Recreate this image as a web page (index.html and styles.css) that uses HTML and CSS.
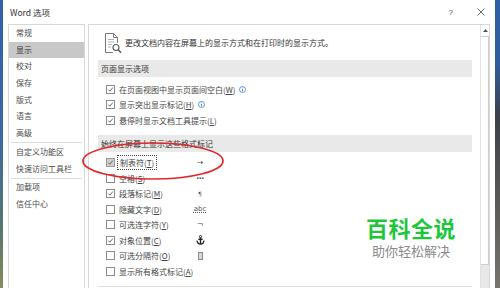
FILE: index.html
```html
<!DOCTYPE html>
<html lang="zh-CN">
<head>
  <meta charset="UTF-8">
  <title>Word 选项</title>
  <link rel="stylesheet" href="styles.css">
</head>
<body>
  <div class="screen">
    <div class="desk desk-left"></div>

    <div class="window">
      <div class="titlebar">
        <span class="title">Word 选项</span>
        <span class="help">?</span>
        <svg class="close" width="8" height="8" viewBox="0 0 8 8">
          <path d="M0.5 0.5 L7.5 7.5 M7.5 0.5 L0.5 7.5" stroke="#555" stroke-width="0.9"/>
        </svg>
      </div>

      <div class="panes">
        <ul class="nav">
          <li>常规</li>
          <li class="active">显示</li>
          <li>校对</li>
          <li>保存</li>
          <li>版式</li>
          <li>语言</li>
          <li>高级</li>
          <li class="sep"></li>
          <li>自定义功能区</li>
          <li>快速访问工具栏</li>
          <li class="sep"></li>
          <li>加载项</li>
          <li>信任中心</li>
        </ul>

        <div class="content">
          <div class="main">
            <div class="intro">
              <svg class="intro-icon" width="18" height="21" viewBox="0 0 18 21">
                <path d="M9 19.5H1.5V0.5h8l4 4V10" fill="none" stroke="#7a7a7a"/>
                <path d="M9.5 0.5v4h4" fill="none" stroke="#7a7a7a"/>
                <path d="M4 6.5h6M4 9h6M4 11.5h4M4 14h3" stroke="#a0a0a0" stroke-width="0.8"/>
                <circle cx="12" cy="14.5" r="3" fill="#fff" stroke="#5a5a5a" stroke-width="1.1"/>
                <path d="M14.2 16.7 L17 19.8" stroke="#5a5a5a" stroke-width="1.6"/>
              </svg>
              <span>更改文档内容在屏幕上的显示方式和在打印时的显示方式。</span>
            </div>

            <div class="section-head">页面显示选项</div>
            <div class="rows first">
              <div class="row">
                <span class="cb"><svg viewBox="0 0 8 8"><path d="M1.5 4.2 L3.3 6 L6.6 1.8" fill="none" stroke="#555"/></svg></span>
                <span>在页面视图中显示页面间空白(<u>W</u>)</span>
                <svg class="info" width="7" height="7" viewBox="0 0 7 7"><circle cx="3.5" cy="3.5" r="3" fill="none" stroke="#3f7fd0" stroke-width="0.8"/><path d="M3.5 3v2.4M3.5 1.6v0.7" stroke="#3f7fd0" stroke-width="0.9"/></svg>
              </div>
              <div class="row">
                <span class="cb"><svg viewBox="0 0 8 8"><path d="M1.5 4.2 L3.3 6 L6.6 1.8" fill="none" stroke="#555"/></svg></span>
                <span>显示突出显示标记(<u>H</u>)</span>
                <svg class="info" width="7" height="7" viewBox="0 0 7 7"><circle cx="3.5" cy="3.5" r="3" fill="none" stroke="#3f7fd0" stroke-width="0.8"/><path d="M3.5 3v2.4M3.5 1.6v0.7" stroke="#3f7fd0" stroke-width="0.9"/></svg>
              </div>
              <div class="row">
                <span class="cb"><svg viewBox="0 0 8 8"><path d="M1.5 4.2 L3.3 6 L6.6 1.8" fill="none" stroke="#555"/></svg></span>
                <span>悬停时显示文档工具提示(<u>L</u>)</span>
              </div>
            </div>

            <div class="section-head">始终在屏幕上显示这些格式标记</div>
            <div class="rows">
              <div class="row">
                <span class="cb hover"><svg viewBox="0 0 8 8"><path d="M1.5 4.2 L3.3 6 L6.6 1.8" fill="none" stroke="#555"/></svg></span>
                <span class="label"><span class="focus">制表符(<u>T</u>)</span></span>
                <span class="mark">→</span>
              </div>
              <div class="row">
                <span class="cb"></span>
                <span class="label">空格(<u>S</u>)</span>
                <span class="mark dots">···</span>
              </div>
              <div class="row">
                <span class="cb"><svg viewBox="0 0 8 8"><path d="M1.5 4.2 L3.3 6 L6.6 1.8" fill="none" stroke="#555"/></svg></span>
                <span class="label">段落标记(<u>M</u>)</span>
                <span class="mark small">¶</span>
              </div>
              <div class="row">
                <span class="cb"></span>
                <span class="label">隐藏文字(<u>D</u>)</span>
                <span class="mark abc">abc</span>
              </div>
              <div class="row">
                <span class="cb"></span>
                <span class="label">可选连字符(<u>Y</u>)</span>
                <span class="mark">¬</span>
              </div>
              <div class="row">
                <span class="cb"><svg viewBox="0 0 8 8"><path d="M1.5 4.2 L3.3 6 L6.6 1.8" fill="none" stroke="#555"/></svg></span>
                <span class="label">对象位置(<u>C</u>)</span>
                <span class="mark">
                  <svg width="9" height="10" viewBox="0 0 9 10">
                    <circle cx="4.5" cy="1.6" r="1.1" fill="none" stroke="#222" stroke-width="1"/>
                    <path d="M4.5 2.7V9M2.4 4.2h4.2" stroke="#222" stroke-width="1.4"/>
                    <path d="M1 5.6 Q1.5 9 4.5 9 Q7.5 9 8 5.6" fill="none" stroke="#222" stroke-width="1.3"/>
                  </svg>
                </span>
              </div>
              <div class="row">
                <span class="cb"></span>
                <span class="label">可选分隔符(<u>O</u>)</span>
                <span class="mark"><span class="zw"></span></span>
              </div>
              <div class="row">
                <span class="cb"></span>
                <span class="label">显示所有格式标记(<u>A</u>)</span>
              </div>
            </div>

            <div class="section-head next"></div>
          </div>

          <div class="scrollbar">
            <div class="sb-up">
              <svg width="5" height="3" viewBox="0 0 5 3"><path d="M0 3 L2.5 0 L5 3Z" fill="#555"/></svg>
            </div>
            <div class="sb-thumb"></div>
            <div class="sb-track"></div>
          </div>
        </div>
      </div>
    </div>

    <div class="desk desk-right"></div>

    <!-- annotation overlays -->
    <svg class="circle-mark" width="500" height="288" viewBox="0 0 500 288">
      <ellipse cx="153" cy="161" rx="70" ry="18" fill="none" stroke="#e5262a" stroke-width="1.7"/>
    </svg>
    <div class="watermark">
      <div class="wm-title">百科全说</div>
      <div class="wm-sub">助你轻松解决</div>
    </div>
  </div>
</body>
</html>
```

FILE: styles.css
```css
body {
  margin: 0;
  width: 500px;
  height: 288px;
  overflow: hidden;
  font-family: "Noto Sans CJK SC", "Liberation Sans", sans-serif;
  color: #444;
}

.screen {
  position: relative;
  display: flex;
  height: 288px;
}

.desk-left {
  width: 3px;
  background: linear-gradient(#2f62ab, #3a68a6 45%, #56786c 80%, #8a8a5c);
}

.desk-right {
  width: 5px;
  background: linear-gradient(#2c5fa9, #2f5e9e 22%, #3c4048 40%, #5f5e5a 75%, #77756e);
}

.window {
  flex: 1;
  display: flex;
  flex-direction: column;
  background: #fff;
  min-width: 0;
}

.titlebar {
  height: 24px;
  display: flex;
  align-items: center;
  padding-left: 7px;
  font-size: 8.5px;
  color: #333;
}

.title {
  flex: 1;
}

.help {
  font-family: "Liberation Sans", sans-serif;
  font-size: 8px;
  color: #555;
  margin-right: 24px;
}

.close {
  margin-right: 10px;
}

.panes {
  flex: 1;
  display: flex;
  gap: 3px;
  padding: 0 5px;
  min-height: 0;
}

/* left navigation */
.nav {
  width: 75px;
  margin: 0;
  padding: 0;
  list-style: none;
  border: 1px solid #d8d8d8;
  border-bottom: none;
  font-size: 8px;
}

.nav li {
  height: 16.7px;
  line-height: 16.7px;
  padding-left: 7px;
  color: #4a4a4a;
  white-space: nowrap;
}

.nav li.active {
  background: #c8c8c8;
  color: #333;
}

.nav li.sep {
  height: 1px;
  margin: 0.5px 2px;
  padding: 0;
  background: #dcdcdc;
}

/* right content */
.content {
  flex: 1;
  display: flex;
  border: 1px solid #d8d8d8;
  border-bottom: none;
  min-width: 0;
}

.main {
  flex: 1;
  overflow: hidden;
  font-size: 8px;
}

.intro {
  height: 35px;
  display: flex;
  align-items: center;
  padding-left: 15px;
  color: #333;
}

.intro-icon {
  margin-right: 3px;
  margin-top: 2px;
}

.section-head {
  height: 17px;
  line-height: 17px;
  margin: 0 8px 0 9px;
  padding-left: 3px;
  background: #e9e9e9;
  color: #333;
}

.section-head.next {
  border-top: 1px solid #e0e0e0;
  background: #fff;
}

.rows {
  margin: 3px 0 7px;
}

.rows.first {
  margin-top: 4.5px;
}

.row {
  height: 15.5px;
  display: flex;
  align-items: center;
  padding-left: 17px;
  white-space: nowrap;
}

.row u {
  text-decoration-thickness: 0.5px;
  text-underline-offset: 1px;
}

.cb {
  width: 7px;
  height: 7px;
  border: 1px solid #8c8c8c;
  background: #fff;
  margin-right: 4px;
  flex: none;
  display: flex;
}

.cb svg {
  width: 7px;
  height: 7px;
}

.cb.hover {
  background: #cfcfcf;
  border-color: #9a9a9a;
}

.info {
  margin-left: 4px;
}

.label {
  width: 75px;
  flex: none;
}

.focus {
  outline: 1px dotted #444;
  outline-offset: 1px;
  padding: 0 1px;
}

.mark {
  width: 12px;
  text-align: center;
  font-family: "DejaVu Sans", sans-serif;
  font-size: 8px;
  color: #555;
  display: flex;
  justify-content: center;
}

.mark.dots {
  font-weight: bold;
  letter-spacing: -0.5px;
}

.mark.small {
  font-size: 6px;
}

.mark.abc {
  font-size: 7px;
  text-decoration: underline dotted;
  text-underline-offset: 1px;
}

.zw {
  width: 3px;
  height: 6px;
  border: 1px solid #8a8a8a;
  background: #d8d8d8;
}

/* scrollbar */
.scrollbar {
  width: 8px;
  display: flex;
  flex-direction: column;
  border-left: 1px solid #e2e2e2;
}

.sb-up {
  height: 11px;
  display: flex;
  align-items: center;
  justify-content: center;
}

.sb-thumb {
  height: 227px;
  border: 1px solid #cdcdcd;
  border-left: none;
  background: #fff;
}

.sb-track {
  flex: 1;
  background: #e8e8e8;
}

/* overlays */
.circle-mark {
  position: absolute;
  left: 0;
  top: 0;
  pointer-events: none;
}

.watermark {
  position: absolute;
  left: 362px;
  top: 215px;
  width: 98px;
  display: flex;
  flex-direction: column;
  align-items: center;
  gap: 3px;
}

.wm-title {
  font-size: 22px;
  line-height: 25px;
  font-weight: bold;
  color: #1fc63b;
  letter-spacing: 0.5px;
}

.wm-sub {
  font-size: 13px;
  line-height: 15px;
  color: #8a8a8a;
}
```
